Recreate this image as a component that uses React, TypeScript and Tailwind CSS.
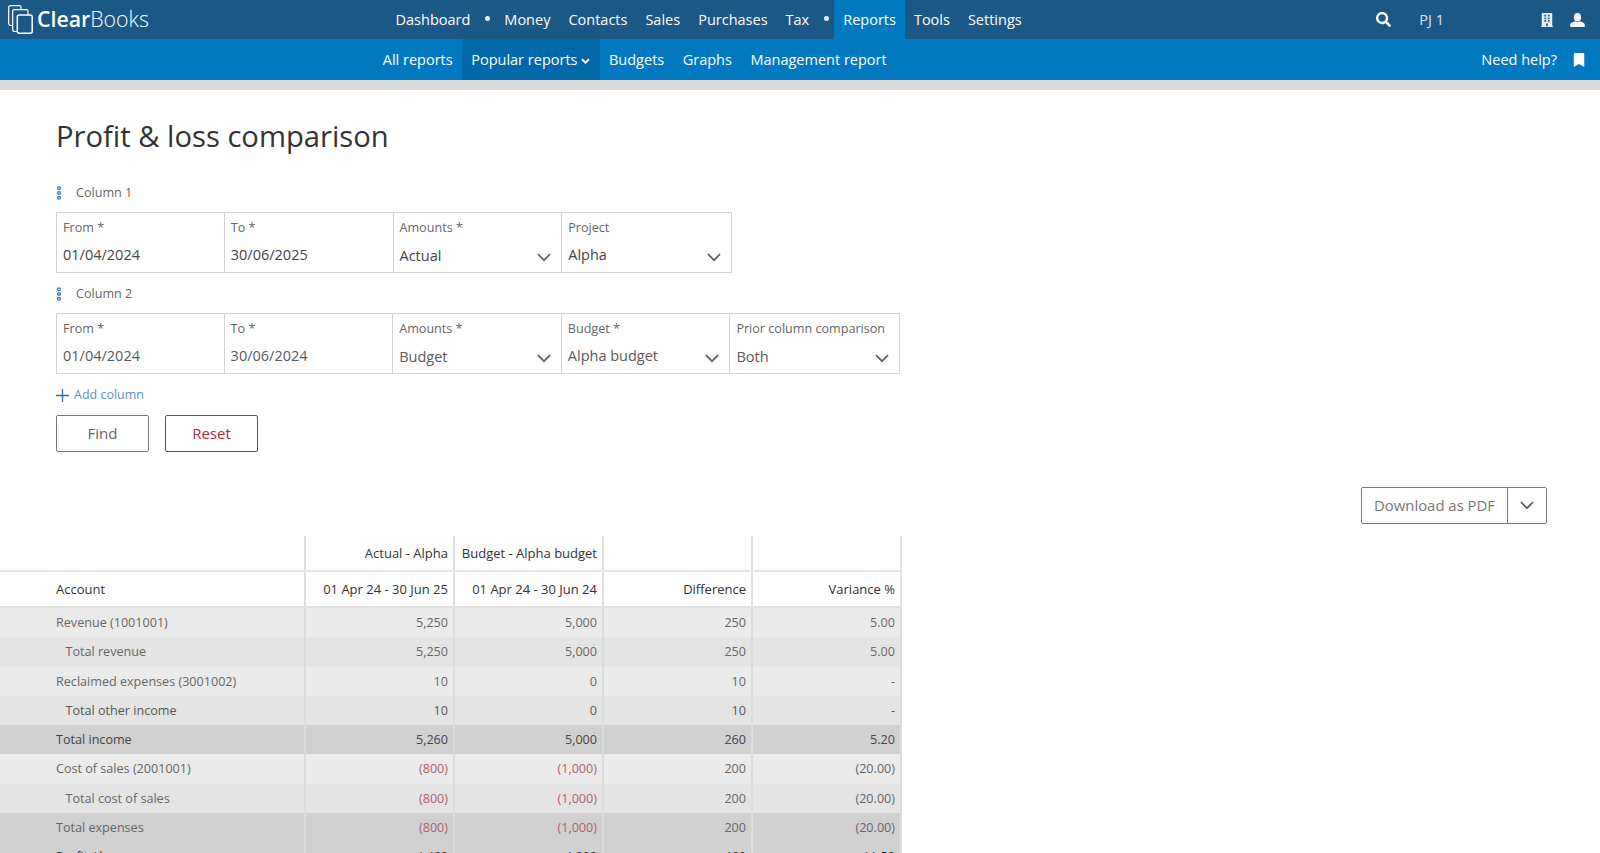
import React from "react";
import { FaSearch, FaBuilding, FaBookmark } from "react-icons/fa";

const Chevron = ({ className = "" }: { className?: string }) => (
  <svg width="14" height="9" viewBox="0 0 14 9" fill="none" className={className}>
    <path d="M1 1.2 7 7.2 13 1.2" stroke="#5f5f5f" strokeWidth="1.7" />
  </svg>
);

const Logo = () => (
  <svg width="25" height="29" viewBox="0 0 25 29" fill="none" stroke="#fff" strokeWidth="1.2" className="shrink-0">
    <path d="M0.7 15V2.2A1.6 1.6 0 0 1 2.3 0.6H11.4A1.6 1.6 0 0 1 13 2.2V4.6" />
    <path d="M4.7 23V6.2A1.6 1.6 0 0 1 6.3 4.6H18.4A1.6 1.6 0 0 1 20 6.2V10" />
    <path d="M0.7 15V18A2.5 2.5 0 0 0 3.2 20.5H4.7" />
    <path d="M4.7 23V24.5A2 2 0 0 0 6.7 26.5H9" />
    <rect x="9.3" y="10" width="14.9" height="18.2" rx="2" strokeWidth="1.5" />
  </svg>
);

const Handle = () => (
  <svg width="6" height="14" viewBox="0 0 6 14" fill="none" stroke="#3a76b8" strokeWidth="1.3">
    <circle cx="3" cy="2.2" r="1.4" />
    <circle cx="3" cy="7" r="1.4" />
    <circle cx="3" cy="11.8" r="1.4" />
  </svg>
);

const UserIcon = () => (
  <svg width="15" height="14" viewBox="0 0 15 14" fill="#f2f5f8" className="shrink-0">
    <ellipse cx="7.5" cy="4.3" rx="3.6" ry="4.3" />
    <path d="M5.4 8.2C3.8 9 0.4 9.4 0.2 11.6V14H14.8V11.6C14.6 9.4 11.2 9 9.6 8.2 8.4 9.4 6.6 9.4 5.4 8.2Z" />
  </svg>
);

const Field = ({ label, value, select, dark, raise, first }: { label: string; value: string; select?: boolean; dark?: boolean; raise?: boolean; first?: boolean }) => (
  <div className={`${first ? "w-[168px]" : "w-[169px]"} h-full border-r border-[#d4d4d4] last:border-r-0 pl-[6px] pr-[10px] pt-[7px] flex flex-col`}>
    <div className="text-[12.6px] leading-[16px] text-[#666]">{label}</div>
    <div className={`flex items-center justify-between ${select && !raise ? "mt-[10px]" : "mt-[9px]"}`}>
      <span className={`text-[14.5px] leading-[20px] ${dark ? "text-[#444]" : "text-[#595959]"}`}>{value}</span>
      {select && <Chevron className={raise ? "mt-[4px]" : "mt-[2px]"} />}
    </div>
  </div>
);

const topNav = [
  { t: "Dashboard" },
  { dot: true },
  { t: "Money" },
  { t: "Contacts" },
  { t: "Sales" },
  { t: "Purchases" },
  { t: "Tax" },
  { dot: true },
  { t: "Reports", active: true },
  { t: "Tools" },
  { t: "Settings" },
];

type Row = { label: string; indent?: boolean; bg: string; text: string; vals: string[] };
const A = "bg-[#ebebeb]";
const B = "bg-[#e4e4e4]";
const C = "bg-[#d1d1d1]";
const rows: Row[] = [
  { label: "Revenue (1001001)", bg: A, text: "text-[#666]", vals: ["5,250", "5,000", "250", "5.00"] },
  { label: "Total revenue", indent: true, bg: B, text: "text-[#666]", vals: ["5,250", "5,000", "250", "5.00"] },
  { label: "Reclaimed expenses (3001002)", bg: A, text: "text-[#666]", vals: ["10", "0", "10", "-"] },
  { label: "Total other income", indent: true, bg: B, text: "text-[#555]", vals: ["10", "0", "10", "-"] },
  { label: "Total income", bg: C, text: "text-[#444]", vals: ["5,260", "5,000", "260", "5.20"] },
  { label: "Cost of sales (2001001)", bg: A, text: "text-[#666]", vals: ["(800)", "(1,000)", "200", "(20.00)"] },
  { label: "Total cost of sales", indent: true, bg: B, text: "text-[#666]", vals: ["(800)", "(1,000)", "200", "(20.00)"] },
  { label: "Total expenses", bg: C, text: "text-[#666]", vals: ["(800)", "(1,000)", "200", "(20.00)"] },
  { label: "Profit / loss", bg: C, text: "text-[#333]", vals: ["4,460", "4,000", "460", "11.50"] },
];

const headCell = "w-[149px] border-r-2 border-[#e0e0e0] flex items-center justify-end pr-[5px] pt-[2px]";
const subItem = "px-[9.25px] h-full flex items-center";

export default function App() {
  return (
    <div className="h-[853px] overflow-hidden bg-white font-['Open_Sans',sans-serif]">
      <div className="h-[39px] bg-[#1b5886] flex items-center text-white">
        <div className="w-[386.5px] h-full flex items-center pl-[8px] gap-[4px]">
          <Logo />
          <span className="text-[21.3px] leading-none mt-[-1px]"><span className="font-semibold">Clear</span><span className="font-light">Books</span></span>
        </div>
        <div className="flex h-full items-center text-[14.5px]">
          {topNav.map((n, i) =>
            n.dot ? (
              <span key={i} className="w-[16px] flex justify-center"><span className="w-[5px] h-[5px] rounded-full bg-[#e8eef3] -mt-[2px]" /></span>
            ) : (
              <span key={i} className={`h-full flex items-center px-[9px] ${n.active ? "bg-[#0079c1]" : ""}`}>{n.t}</span>
            )
          )}
        </div>
        <div className="ml-auto flex items-center h-full">
          <FaSearch className="text-[15px]" />
          <span className="ml-[28px] text-[14.5px] text-[#d5e6f2]">PJ 1</span>
          <FaBuilding className="ml-[96px] text-[14px] text-[#e6eef4]" />
          <span className="ml-[16px] mr-[15px]"><UserIcon /></span>
        </div>
      </div>
      <div className="h-[41px] bg-[#0079c1] flex items-center text-white text-[14.5px]">
        <div className="w-[373.5px]" />
        <span className={subItem}>All reports</span>
        <span className={`${subItem} bg-[#0069a9] gap-[4px]`}>
          Popular reports
          <svg width="9" height="7" viewBox="0 0 9 7" fill="none" className="mt-[3px]"><path d="M1 1.2 4.5 4.7 8 1.2" stroke="#fff" strokeWidth="2" /></svg>
        </span>
        <span className={subItem}>Budgets</span>
        <span className={subItem}>Graphs</span>
        <span className={subItem}>Management report</span>
        <span className="ml-auto">Need help?</span>
        <FaBookmark className="ml-[15px] mr-[14px] text-[14px]" />
      </div>
      <div className="h-[10px] bg-[#d9d9d9]" />

      <div className="pl-[56px]">
        <h1 className="pt-[26px] text-[29.2px] leading-[40px] text-[#333] font-normal">Profit &amp; loss comparison</h1>

        <div className="mt-[29px] h-[16px] flex items-center gap-[14px]">
          <Handle />
          <span className="text-[12.6px] text-[#666]">Column 1</span>
        </div>
        <div className="mt-[11px] h-[61px] w-[676px] border border-[#d4d4d4] flex">
          <Field first label="From *" value="01/04/2024" dark />
          <Field label="To *" value="30/06/2025" dark />
          <Field label="Amounts *" value="Actual" select dark />
          <Field label="Project" value="Alpha" select dark raise />
        </div>

        <div className="mt-[13px] h-[16px] flex items-center gap-[14px]">
          <Handle />
          <span className="text-[12.6px] text-[#666]">Column 2</span>
        </div>
        <div className="mt-[11px] h-[61px] w-[844px] border border-[#d4d4d4] flex">
          <Field first label="From *" value="01/04/2024" />
          <Field label="To *" value="30/06/2024" />
          <Field label="Amounts *" value="Budget" select />
          <Field label="Budget *" value="Alpha budget" select raise />
          <Field label="Prior column comparison" value="Both" select />
        </div>

        <div className="mt-[12px] h-[18px] flex items-center gap-[5px] text-[12.5px] text-[#5b8fc7]">
          <svg width="13" height="13" viewBox="0 0 13 13" stroke="#2f6fb0" strokeWidth="1.3"><path d="M6.5 0v13M0 6.5h13" /></svg>
          Add column
        </div>

        <div className="mt-[11px] flex gap-[16px]">
          <button className="w-[93px] h-[37px] border border-[#777] rounded-[2px] text-[15px] font-medium text-[#666]">Find</button>
          <button className="w-[93px] h-[37px] border border-[#c0272d] rounded-[2px] text-[15px] font-medium text-[#b52a30]">Reset</button>
        </div>

        <div className="mt-[35px] flex justify-end pr-[53px]">
          <div className="w-[186px] h-[37px] border border-[#777] rounded-[2px] flex">
            <div className="flex-1 flex items-center justify-center text-[14.9px] text-[#777] font-medium">Download as PDF</div>
            <div className="w-[39px] border-l border-[#777] flex items-center justify-center"><Chevron /></div>
          </div>
        </div>
      </div>

      <div className="mt-[12px] w-[902px] text-[12.6px]">
        <div className="flex h-[36px] border-b-2 border-[#e6e6e6] text-[#333] text-[13px]">
          <div className="w-[306px] border-r-2 border-[#e0e0e0]" />
          <div className={headCell}>Actual - Alpha</div>
          <div className={headCell}>Budget - Alpha budget</div>
          <div className={headCell} />
          <div className={headCell} />
        </div>
        <div className="flex h-[36px] border-b-2 border-[#e0e0e0] text-[#333] text-[13px]">
          <div className="w-[306px] border-r-2 border-[#e0e0e0] flex items-center pl-[56px] pt-[2px]">Account</div>
          <div className={headCell}>01 Apr 24 - 30 Jun 25</div>
          <div className={headCell}>01 Apr 24 - 30 Jun 24</div>
          <div className={headCell}>Difference</div>
          <div className={headCell}>Variance %</div>
        </div>
        {rows.map((r, i) => (
          <div key={i} className={`flex h-[29.25px] ${r.bg} ${r.text}`}>
            <div className={`w-[306px] border-r-2 border-[#dcdcdc] flex items-center pt-[2px] ${r.indent ? "pl-[65.5px]" : "pl-[56px]"}`}>{r.label}</div>
            {r.vals.map((v, j) => {
              const red = j < 2 && v.startsWith("(");
              return (
                <div key={j} className={`w-[149px] border-r-2 border-[#dcdcdc] flex items-center justify-end pr-[5px] pt-[2px] ${red ? "text-[#b0606c]" : ""}`}>{v}</div>
              );
            })}
          </div>
        ))}
      </div>
    </div>
  );
}
